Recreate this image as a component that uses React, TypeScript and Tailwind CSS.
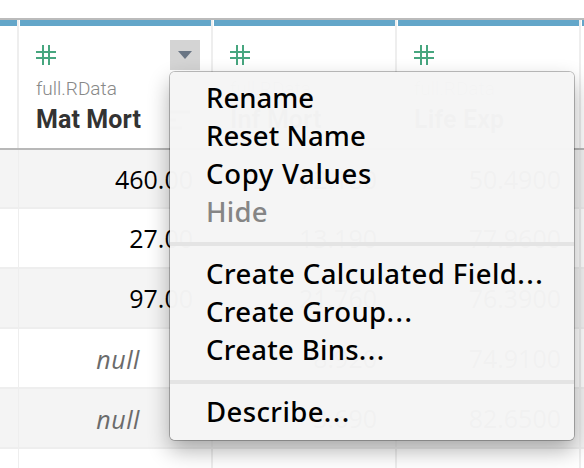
import React from "react";

type Column = {
  name?: string;
  source?: string;
  values: (string | null)[];
  width: string;
  active?: boolean;
};

const columns: Column[] = [
  { values: ["", "", "", "", "", ""], width: "w-[19px]" },
  {
    name: "Mat Mort",
    source: "full.RData",
    values: ["460.00", "27.00", "97.00", null, null, ""],
    width: "w-[194px]",
    active: true,
  },
  {
    name: "Inf Mort",
    source: "full.RData",
    values: ["72.180", "13.190", "21.760", "8.920", "3.690", ""],
    width: "w-[184px]",
  },
  {
    name: "Life Exp",
    source: "full.RData",
    values: ["50.4900", "77.9600", "76.3900", "74.9100", "82.6500", ""],
    width: "w-[184px]",
  },
  { values: ["", "", "", "", "", ""], width: "w-[20px]" },
];

function NumberIcon() {
  return (
    <svg width="20" height="20" viewBox="0 0 20 20" className="block" stroke="#47a67f" strokeWidth="2">
      <path d="M7 0V20M13 0V20M0 7H20M0 13H20" fill="none" />
    </svg>
  );
}

function ColumnView({ column, index }: { column: Column; index: number }) {
  return (
    <div className={`shrink-0 overflow-hidden ${column.width}`}>
      <div className="flex h-[128px] border-r-2 border-[#eeeeee]">
        <div className={`min-w-0 flex-1 border-t-[6px] border-[#63a6c9] ${index > 0 ? "ml-px" : ""}`}>
          {column.name && (
            <div className="pl-4 pt-[19px]">
              <div className="flex h-5 items-center justify-between pr-[11px]">
                <NumberIcon />
                {column.active && (
                  <div className="flex h-[30px] w-[30px] shrink-0 items-center justify-center bg-[#d4d4d4]">
                    <svg width="14" height="8" viewBox="0 0 14 8">
                      <path d="M0 0H14L7 8Z" fill="#697584" />
                    </svg>
                  </div>
                )}
              </div>
              <div className="mt-3 h-6 font-['Roboto',sans-serif] text-[19px] font-light leading-6 text-[#888888]">
                {column.source}
              </div>
              <div className="mt-[3px] flex h-8 items-center justify-between pr-[21px] font-['Roboto',sans-serif] text-[25px] font-bold leading-8 tracking-[0.1px] text-[#333333]">
                <span className="whitespace-nowrap">{column.name}</span>
                {column.active && (
                  <svg width="20" height="20" viewBox="0 0 20 20" stroke="#999999" strokeWidth="3">
                    <path d="M0 2H20M0 10H6M0 18H12" />
                  </svg>
                )}
              </div>
            </div>
          )}
        </div>
      </div>
      <div className="h-0.5 bg-[#b8b8b8]" />
      {column.values.map((value, i) => (
        <div
          key={i}
          className={`flex items-center justify-end border-b-2 border-r-2 border-[#eeeeee] ${i === 0 ? "h-[59px]" : "h-[60px]"} ${i % 2 === 0 && i < 5 ? "bg-[#f4f4f4]" : "bg-white"} ${value === null ? "pr-[71px]" : "pr-[18px]"}`}
        >
          {value === null ? (
            <span className="pt-px font-['Open_Sans',sans-serif] text-[25px] italic leading-[30px] tracking-[0.6px] text-[#6b6b6b]">null</span>
          ) : (
            <span className="font-['Open_Sans',sans-serif] text-[25px] leading-[30px] text-black">{value}</span>
          )}
        </div>
      ))}
    </div>
  );
}

function MenuItem({ label, disabled, tracking = "tracking-normal" }: { label: string; disabled?: boolean; tracking?: string }) {
  return (
    <div className={`h-[38px] whitespace-nowrap pl-9 leading-[38px] ${tracking} ${disabled ? "text-[#858585]" : "text-black"}`}>
      {label.replace("...", "")}
      {label.endsWith("...") && <span className="tracking-[1.5px]">...</span>}
    </div>
  );
}

function Separator() {
  return <div className="mb-[9px] mt-[11px] h-1 bg-[#e4e4e4]" />;
}

export default function App() {
  return (
    <div className="relative h-[468px] w-[584px] overflow-hidden bg-white">
      <div className="h-[18px]" />
      <div className="h-0.5 bg-[#bbbbbb]" />
      <div className="flex">
        {columns.map((column, i) => (
          <ColumnView key={i} column={column} index={i} />
        ))}
      </div>
      <div className="absolute left-[170px] top-[72px] h-[368px] w-[404px] rounded-[5px] bg-[#f5f5f5]/[0.985] pt-[7px] font-['Noto_Sans',sans-serif] text-[27.5px] font-medium shadow-[0_0_0_1px_rgba(0,0,0,0.25),0_10px_22px_rgba(0,0,0,0.32)]">
        <MenuItem label="Rename" />
        <MenuItem label="Reset Name" tracking="tracking-[0.1px]" />
        <MenuItem label="Copy Values" tracking="tracking-[0.7px]" />
        <MenuItem label="Hide" disabled tracking="tracking-[0.2px]" />
        <Separator />
        <MenuItem label="Create Calculated Field..." tracking="tracking-[0.46px]" />
        <MenuItem label="Create Group..." tracking="tracking-[0.4px]" />
        <MenuItem label="Create Bins..." tracking="tracking-[0.3px]" />
        <Separator />
        <MenuItem label="Describe..." tracking="tracking-[0.4px]" />
      </div>
    </div>
  );
}
